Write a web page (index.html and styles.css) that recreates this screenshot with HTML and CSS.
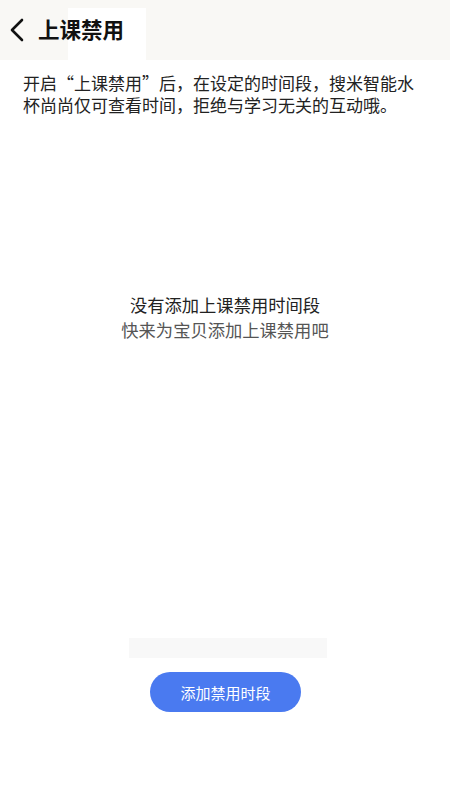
FILE: index.html
```html
<!DOCTYPE html>
<html lang="zh-CN">
<head>
<meta charset="utf-8">
<link rel="stylesheet" href="styles.css">
</head>
<body>
<div class="page">
  <header class="header">
    <span class="title-bg"></span>
    <svg class="back" width="16" height="24" viewBox="0 0 16 24"><path d="M13 2 L3 12 L13 22" fill="none" stroke="#111" stroke-width="2.6" stroke-linecap="round" stroke-linejoin="round"/></svg>
    <h1 class="title">上课禁用</h1>
  </header>
  <p class="desc">开启“上课禁用”后，在设定的时间段，搜米智能水杯尚尚仅可查看时间，拒绝与学习无关的互动哦。</p>
  <div class="empty">
    <div class="empty-main">没有添加上课禁用时间段</div>
    <div class="empty-sub">快来为宝贝添加上课禁用吧</div>
  </div>
  <div class="placeholder"></div>
  <button class="add-btn">添加禁用时段</button>
</div>
</body>
</html>
```
FILE: styles.css
```css
* { box-sizing: border-box; }
html, body { margin: 0; padding: 0; background: #fff; }
body { font-family: "Noto Sans CJK SC", "Noto Sans", sans-serif; }
.page { width: 450px; height: 800px; display: flex; flex-direction: column; }
.header {
  position: relative;
  height: 60px;
  background: #f9f8f5;
  display: flex;
  align-items: center;
  padding-left: 9px;
  gap: 13px;
}
.title-bg {
  position: absolute;
  left: 68px; top: 8px;
  width: 78px; height: 52px;
  background: #fff;
}
.back { position: relative; flex: none; margin-top: -1px; }
.title {
  position: relative;
  margin: 0;
  font-size: 21.5px;
  font-weight: 700;
  color: #111;
  line-height: 28px;
  margin-top: -2px;
}
.desc {
  margin: 12px 0 0;
  padding: 0 24px 0 23px;
  font-size: 17px;
  line-height: 22px;
  color: #222;
}
.empty {
  margin-top: 176px;
  display: flex;
  flex-direction: column;
  align-items: center;
  font-size: 17.3px;
  line-height: 25px;
}
.empty-main { color: #222; }
.empty-sub { color: #555; }
.placeholder {
  margin: 296px auto 0 129px;
  width: 198px;
  height: 20px;
  background: #f8f8f8;
}
.add-btn {
  margin: 14px 0 0 150px;
  width: 151px;
  height: 40px;
  border: none;
  border-radius: 20px;
  background: #4a7af0;
  color: #fff;
  font-family: inherit;
  font-size: 15px;
  padding: 0;
}
```
